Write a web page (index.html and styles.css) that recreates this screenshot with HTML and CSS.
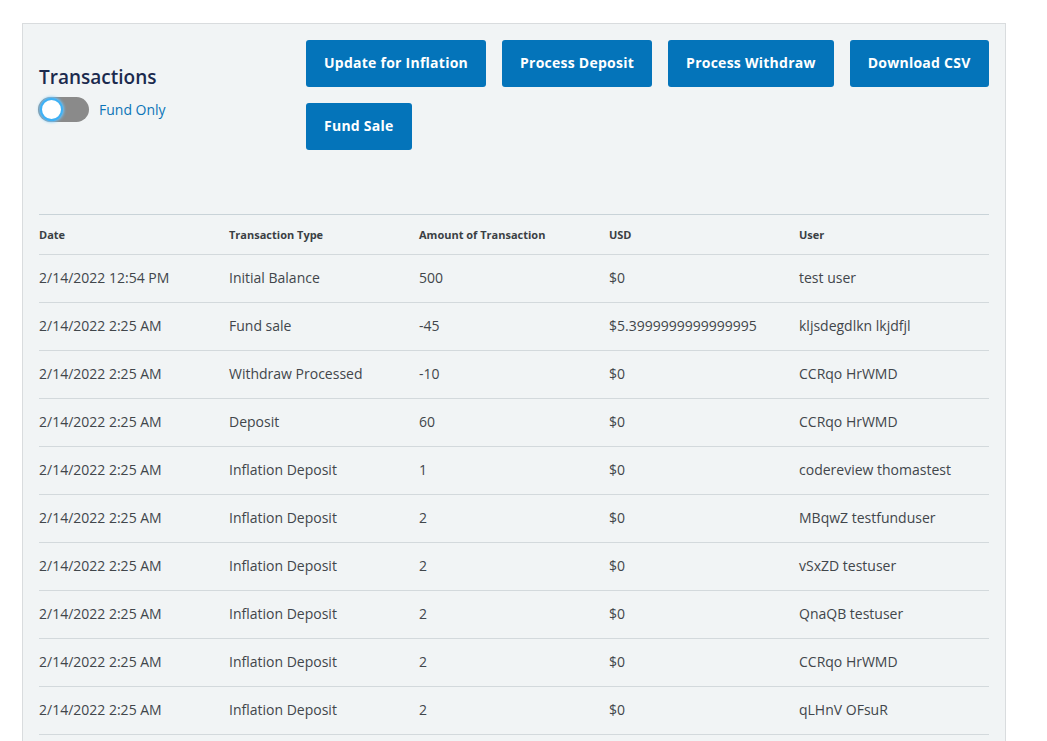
FILE: index.html
```html
<!DOCTYPE html>
<html>
<head>
<meta charset="utf-8">
<link rel="stylesheet" href="styles.css">
</head>
<body>
<div class="page">
  <section class="panel">
    <div class="header">
      <div class="title-col">
        <h2 class="title">Transactions</h2>
        <label class="toggle-row">
          <span class="toggle"><span class="knob"></span></span>
          <span class="toggle-label">Fund Only</span>
        </label>
      </div>
      <div class="actions">
        <button class="btn">Update for Inflation</button>
        <button class="btn">Process Deposit</button>
        <button class="btn">Process Withdraw</button>
        <button class="btn">Download CSV</button>
        <button class="btn">Fund Sale</button>
      </div>
    </div>
    <table class="tx">
      <thead>
        <tr><th>Date</th><th>Transaction Type</th><th>Amount of Transaction</th><th>USD</th><th>User</th></tr>
      </thead>
      <tbody>
        <tr><td>2/14/2022 12:54 PM</td><td>Initial Balance</td><td>500</td><td>$0</td><td>test user</td></tr>
        <tr><td>2/14/2022 2:25 AM</td><td>Fund sale</td><td>-45</td><td>$5.3999999999999995</td><td>kljsdegdlkn lkjdfjl</td></tr>
        <tr><td>2/14/2022 2:25 AM</td><td>Withdraw Processed</td><td>-10</td><td>$0</td><td>CCRqo HrWMD</td></tr>
        <tr><td>2/14/2022 2:25 AM</td><td>Deposit</td><td>60</td><td>$0</td><td>CCRqo HrWMD</td></tr>
        <tr><td>2/14/2022 2:25 AM</td><td>Inflation Deposit</td><td>1</td><td>$0</td><td>codereview thomastest</td></tr>
        <tr><td>2/14/2022 2:25 AM</td><td>Inflation Deposit</td><td>2</td><td>$0</td><td>MBqwZ testfunduser</td></tr>
        <tr><td>2/14/2022 2:25 AM</td><td>Inflation Deposit</td><td>2</td><td>$0</td><td>vSxZD testuser</td></tr>
        <tr><td>2/14/2022 2:25 AM</td><td>Inflation Deposit</td><td>2</td><td>$0</td><td>QnaQB testuser</td></tr>
        <tr><td>2/14/2022 2:25 AM</td><td>Inflation Deposit</td><td>2</td><td>$0</td><td>CCRqo HrWMD</td></tr>
        <tr><td>2/14/2022 2:25 AM</td><td>Inflation Deposit</td><td>2</td><td>$0</td><td>qLHnV OFsuR</td></tr>
      </tbody>
    </table>
  </section>
</div>
</body>
</html>
```
FILE: styles.css
```css
* { box-sizing: border-box; }
html, body { margin: 0; padding: 0; background: #ffffff; }
body {
  font-family: "Open Sans", "Lato", sans-serif;
  color: #3d4348;
  overflow: hidden;
}
.page { padding: 23px 0 0 22px; }
.panel {
  width: 984px;
  background: #f1f4f5;
  border: 1px solid #d9dcde;
  padding: 16px 16px 40px 16px;
}
.header {
  display: flex;
  align-items: center;
}
.title-col {
  width: 267px;
  flex: none;
  padding-bottom: 4px;
}
.title {
  margin: 0;
  font-size: 19px;
  font-weight: 600;
  color: #1b2a4e;
  line-height: 24px;
}
.toggle-row {
  display: flex;
  align-items: center;
  margin-top: 8px;
}
.toggle {
  position: relative;
  width: 51px;
  height: 25px;
  border-radius: 13px;
  background: #8a8a8a;
  flex: none;
  margin-left: -1px;
}
.knob {
  position: absolute;
  left: 2px;
  top: 1px;
  width: 23px;
  height: 23px;
  border-radius: 50%;
  background: #ffffff;
  border: 2px solid #3fb1f5;
  box-shadow: 0 0 3px 1px #6cc6ff;
}
.toggle-label {
  margin-left: 10px;
  font-size: 14px;
  color: #0c74b8;
}
.actions {
  flex: 1;
  display: flex;
  flex-wrap: wrap;
  gap: 16px;
}
.btn {
  font-family: inherit;
  background: #0474ba;
  color: #ffffff;
  border: none;
  border-radius: 3px;
  height: 47px;
  padding: 0 18px 2px;
  font-size: 14px;
  font-weight: 700;
  letter-spacing: 0.25px;
}
.tx {
  width: 100%;
  margin-top: 64px;
  border-collapse: collapse;
  table-layout: fixed;
}
.tx th, .tx td {
  text-align: left;
  padding: 0;
  width: 20%;
}
.tx thead tr {
  height: 40px;
  border-top: 1px solid #c9d3d8;
}
.tx th {
  font-size: 11px;
  font-weight: 700;
  color: #3a3f44;
  padding-bottom: 1px;
}
.tx tbody tr {
  height: 48px;
  border-top: 1px solid #d3d9dc;
}
.tx tbody tr:last-child { border-bottom: 1px solid #d3d9dc; }
.tx td {
  font-size: 14px;
  color: #41464b;
  padding-bottom: 2px;
}
```
